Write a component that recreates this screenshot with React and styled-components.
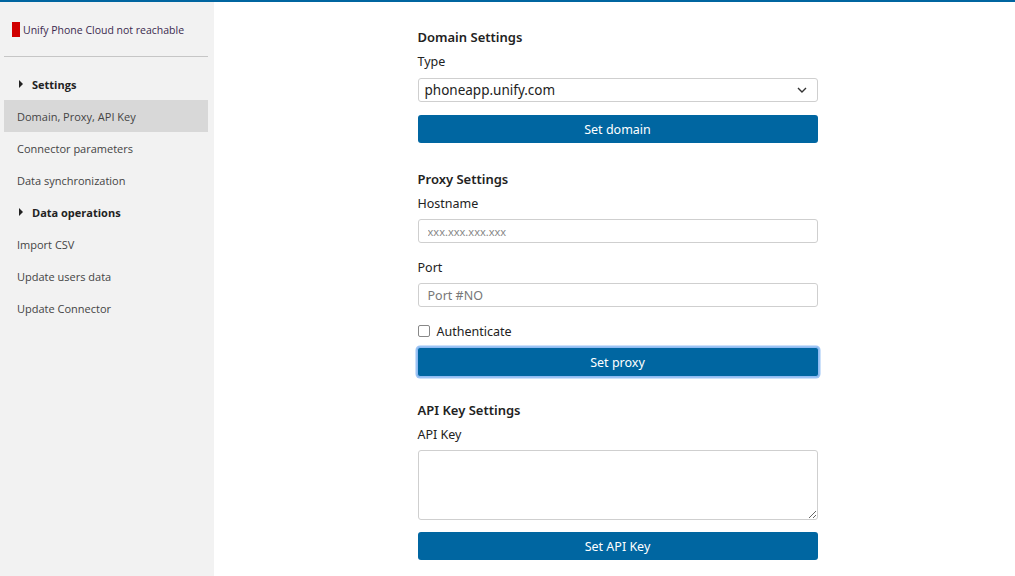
import React from "react";
import styled, { createGlobalStyle } from "styled-components";

const Global = createGlobalStyle`
  html, body { margin: 0; padding: 0; background: #fff; }
  body { font-family: "Open Sans", "Noto Sans", sans-serif; }
  * { box-sizing: border-box; }
`;

const Page = styled.div`
  width: 1015px;
  height: 576px;
  border-top: 2px solid #0065a0;
  display: flex;
  overflow: hidden;
`;

const Sidebar = styled.aside`
  width: 214px;
  flex: none;
  background: #f2f2f2;
  padding: 20px 6px 0 4px;
  font-family: "Open Sans", sans-serif;
  font-size: 11px;
`;

const Status = styled.div`
  display: flex;
  align-items: center;
  gap: 3px;
  padding-left: 8px;
  height: 15px;
  font-size: 10.5px;
  color: #3b2a4f;
`;

const RedBox = styled.span`
  width: 8px;
  height: 15px;
  background: #d00000;
  display: inline-block;
`;

const Divider = styled.hr`
  margin: 19px 0 0 0;
  border: none;
  border-top: 1px solid #c6c6c6;
`;

const Nav = styled.nav`
  margin-top: 11px;
  display: flex;
  flex-direction: column;
`;

const NavItem = styled.div`
  height: 32px;
  display: flex;
  align-items: center;
  padding-left: ${(p) => (p.$group ? "15px" : "13px")};
  gap: 9px;
  color: ${(p) => (p.$group ? "#222" : "#444")};
  font-weight: ${(p) => (p.$group ? 700 : 400)};
  background: ${(p) => (p.$active ? "#d8d8d8" : "transparent")};
`;

const Caret = styled.span`
  width: 0;
  height: 0;
  border-top: 4px solid transparent;
  border-bottom: 4px solid transparent;
  border-left: 4px solid #222;
`;

const Main = styled.main`
  flex: 1;
  display: flex;
  justify-content: center;
  padding: 25px 0 0 6px;
  font-family: "Segoe UI", "Noto Sans", "Open Sans", sans-serif;
  color: #222;
`;

const Column = styled.div`
  width: 400px;
  display: flex;
  flex-direction: column;
`;

const Section = styled.section`
  display: flex;
  flex-direction: column;
  margin-bottom: ${(p) => p.$mb || "26px"};
`;

const Heading = styled.h3`
  margin: 0 0 6px 0;
  font-size: 13px;
  font-weight: 600;
  line-height: 20px;
  color: #222;
`;

const Label = styled.label`
  font-size: 12.5px;
  line-height: 18px;
  margin-bottom: ${(p) => p.$mb || "6px"};
  color: #222;
`;

const SelectBox = styled.div`
  height: 24px;
  border: 1px solid #cfcfcf;
  border-radius: 3px;
  display: flex;
  align-items: center;
  justify-content: space-between;
  padding: 0 10px 0 6px;
  font-size: 13.5px;
  color: #222;
`;

const Input = styled.input`
  height: 24px;
  border: 1px solid #cfcfcf;
  border-radius: 3px;
  padding: 0 9px;
  font-family: inherit;
  font-size: ${(p) => p.$fs || "12.5px"};
  margin-bottom: 16px;
  outline: none;
  &::placeholder { color: ${(p) => p.$ph || "#777"}; }
`;

const TextArea = styled.textarea`
  height: 70px;
  border: 1px solid #cfcfcf;
  border-radius: 3px;
  font-family: inherit;
  resize: vertical;
  outline: none;
`;

const Button = styled.button`
  height: ${(p) => (p.$focus ? "30px" : "28px")};
  margin: ${(p) => (p.$focus ? "0 -1px" : "0")};
  margin-top: ${(p) => p.$mt || "13px"};
  background: #0066a1;
  color: #fff;
  border: ${(p) => (p.$focus ? "1px solid #8fbcf3" : "none")};
  box-shadow: ${(p) => (p.$focus ? "0 0 0 1.5px #9cc4f5" : "none")};
  border-radius: 3px;
  font-family: inherit;
  font-size: 12.5px;
`;

const CheckRow = styled.label`
  display: flex;
  align-items: center;
  gap: 7px;
  font-size: 12.5px;
  height: 16px;
`;

const Check = styled.span`
  width: 12px;
  height: 12px;
  border: 1px solid #888;
  border-radius: 2px;
  background: #fff;
`;

export default function App() {
  return (
    <>
      <Global />
      <Page>
        <Sidebar>
          <Status>
            <RedBox />
            <span>Unify Phone Cloud not reachable</span>
          </Status>
          <Divider />
          <Nav>
            <NavItem $group><Caret />Settings</NavItem>
            <NavItem $active>Domain, Proxy, API Key</NavItem>
            <NavItem>Connector parameters</NavItem>
            <NavItem>Data synchronization</NavItem>
            <NavItem $group><Caret />Data operations</NavItem>
            <NavItem>Import CSV</NavItem>
            <NavItem>Update users data</NavItem>
            <NavItem>Update Connector</NavItem>
          </Nav>
        </Sidebar>
        <Main>
          <Column>
            <Section>
              <Heading>Domain Settings</Heading>
              <Label $mb="7px">Type</Label>
              <SelectBox>
                <span>phoneapp.unify.com</span>
                <svg width="10" height="6" viewBox="0 0 10 6">
                  <path d="M1 1l4 4 4-4" fill="none" stroke="#333" strokeWidth="1.4" />
                </svg>
              </SelectBox>
              <Button $mt="13px">Set domain</Button>
            </Section>
            <Section $mb="23px">
              <Heading>Proxy Settings</Heading>
              <Label>Hostname</Label>
              <Input placeholder="xxx.xxx.xxx.xxx" $fs="11px" $ph="#888" />
              <Label>Port</Label>
              <Input placeholder="Port #NO" />
              <CheckRow><Check />Authenticate</CheckRow>
              <Button $focus $mt="8px">Set proxy</Button>
            </Section>
            <Section>
              <Heading>API Key Settings</Heading>
              <Label>API Key</Label>
              <TextArea />
              <Button $mt="12px">Set API Key</Button>
            </Section>
          </Column>
        </Main>
      </Page>
    </>
  );
}
